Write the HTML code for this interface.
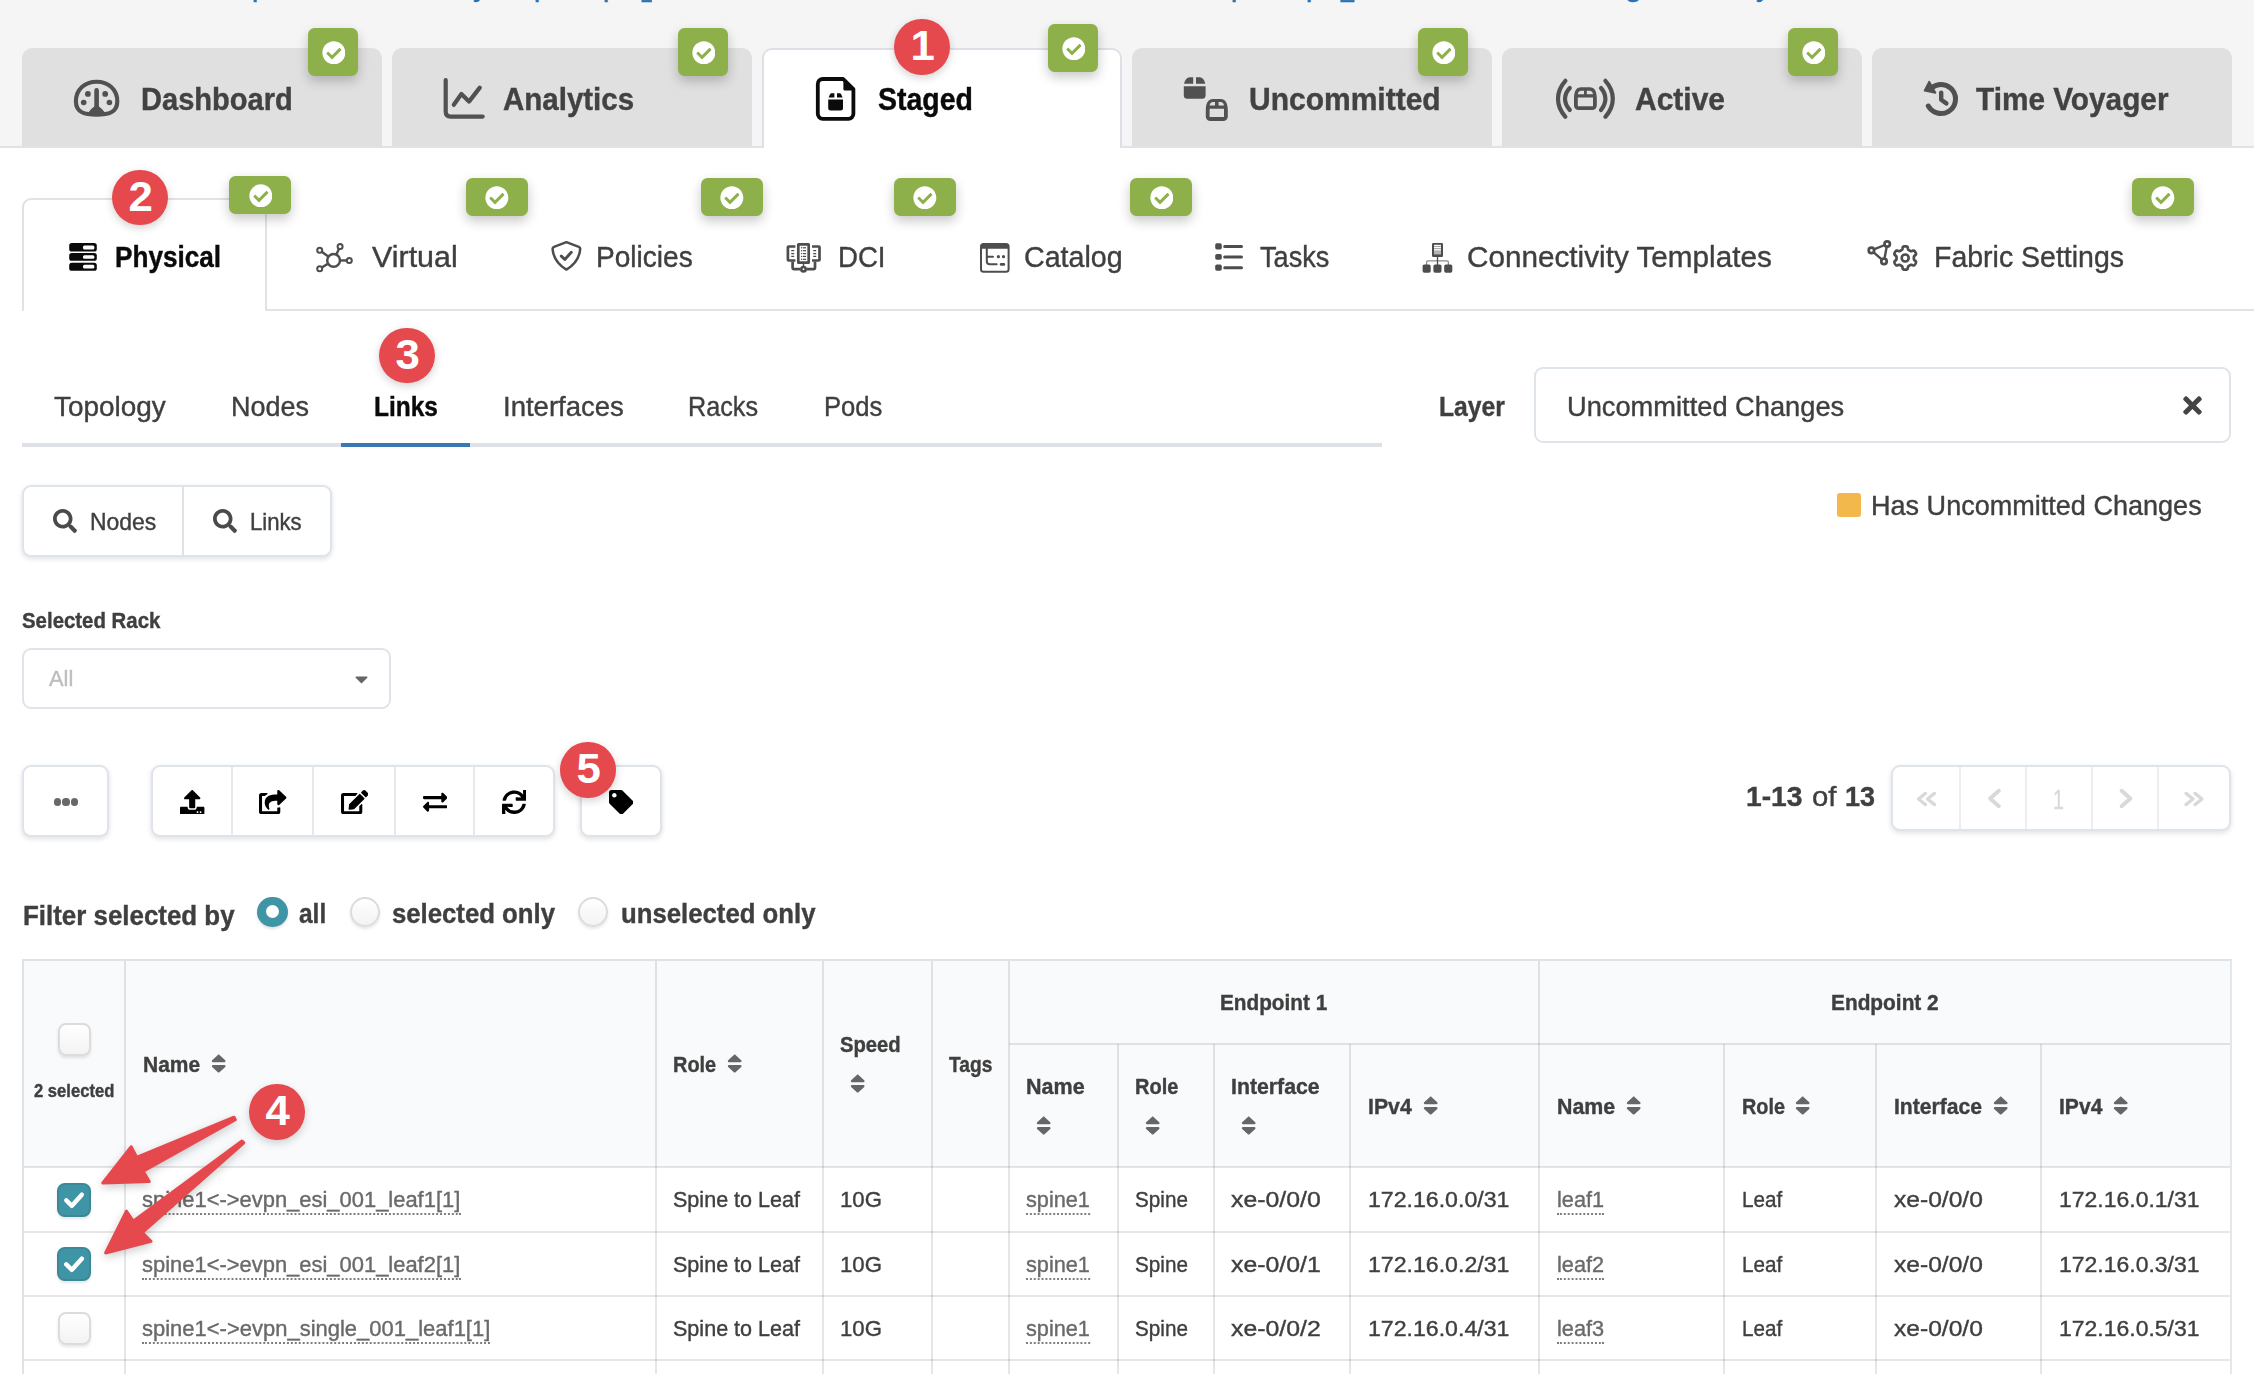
<!DOCTYPE html>
<html lang="en"><head><meta charset="utf-8"><title>Blueprint - Staged - Physical - Links</title>
<style>
html,body{margin:0;padding:0}
body{width:2254px;height:1374px;overflow:hidden;position:relative;background:#f5f5f5;
 font-family:"Liberation Sans",sans-serif;color:#3d3d3d}
#page{position:absolute;left:0;top:0;width:2254px;height:1374px;overflow:hidden}
#page div,#page nav,#page section,#page a,#page label,#page button,#page header,.a{position:absolute;box-sizing:border-box}
.t{-webkit-text-stroke:.4px currentColor;position:absolute;white-space:nowrap;line-height:1em;transform-origin:0 50%;display:block;text-decoration:none}
.white{background:#fff}
.tab{background:#e0e0e0;border-radius:10px 10px 0 0}
.tab.on{background:#fff;border:2px solid #dde1e7;border-bottom:none}
.badge{background:#8db04b;border-radius:6.5px;box-shadow:0 5px 12px rgba(0,0,0,.22)}
.num{background:#e5484d;border-radius:50%;box-shadow:0 3px 8px rgba(0,0,0,.18)}
.btn{background:#fff;border:2px solid #dfe3ea;border-radius:9px;box-shadow:0 2px 5px rgba(40,50,70,.15)}
.sel{background:#fff;border:2px solid #dfe3ea;border-radius:9px}
.cb{background:linear-gradient(#fff,#f3f3f3);border:2px solid #dcdcdc;border-radius:8px;box-shadow:0 2px 3px rgba(0,0,0,.10)}
.cb.on{background:#3f94a5;border-color:#3a8898}
.rd{background:linear-gradient(#fff,#f3f3f3);border:2px solid #dcdcdc;border-radius:50%;box-shadow:0 2px 3px rgba(0,0,0,.10)}
.vl{background:#dfe1e5;width:2px}
.hl{background:#dfe1e5;height:2px}
.dot{border-bottom:2px dotted #777}

</style></head>
<body>
<div id="page">
<header style="left:0;top:0;width:2254px;height:20px;overflow:hidden">
<span id="t0" class="t" style="left:251.7px;top:-29px;font-size:30px;color:#2a70b4;">p</span>
<span id="t1" class="t" style="left:473.0px;top:-29px;font-size:30px;color:#2a70b4;">y</span>
<span id="t2" class="t" style="left:533.7px;top:-29px;font-size:30px;color:#2a70b4;">p</span>
<span id="t3" class="t" style="left:602.7px;top:-29px;font-size:30px;color:#2a70b4;">p</span>
<span id="t4" class="t" style="left:642.4px;top:-29px;font-size:30px;color:#2a70b4;transform:scaleX(0.5753);">_</span>
<span id="t5" class="t" style="left:1230.7px;top:-29px;font-size:30px;color:#2a70b4;">p</span>
<span id="t6" class="t" style="left:1305.7px;top:-29px;font-size:30px;color:#2a70b4;">p</span>
<span id="t7" class="t" style="left:1341.0px;top:-29px;font-size:30px;color:#2a70b4;transform:scaleX(0.7790);">_</span>
<span id="t8" class="t" style="left:1625.0px;top:-29px;font-size:30px;color:#2a70b4;">g</span>
<span id="t9" class="t" style="left:1756.0px;top:-29px;font-size:30px;color:#2a70b4;">y</span>
</header>
<nav style="left:0;top:0;width:2254px;height:148px">
<div class="tab" style="left:22px;top:48px;width:360px;height:98px;"></div>
<span id="t10" class="t" style="left:141.3px;top:84px;font-size:31px;font-weight:700;color:#424242;transform:scaleX(0.9369);">Dashboard</span>
<div class="tab" style="left:392px;top:48px;width:360px;height:98px;"></div>
<span id="t11" class="t" style="left:502.5px;top:84px;font-size:31px;font-weight:700;color:#424242;transform:scaleX(0.9511);">Analytics</span>
<div class="tab on" style="left:762px;top:48px;width:360px;height:100px;"></div>
<span id="t12" class="t" style="left:877.8px;top:84px;font-size:31px;font-weight:700;color:#0a0a0a;transform:scaleX(0.9191);">Staged</span>
<div class="tab" style="left:1132px;top:48px;width:360px;height:98px;"></div>
<span id="t13" class="t" style="left:1248.8px;top:84px;font-size:31px;font-weight:700;color:#424242;transform:scaleX(0.9678);">Uncommitted</span>
<div class="tab" style="left:1502px;top:48px;width:360px;height:98px;"></div>
<span id="t14" class="t" style="left:1635.0px;top:84px;font-size:31px;font-weight:700;color:#424242;transform:scaleX(0.9673);">Active</span>
<div class="tab" style="left:1872px;top:48px;width:360px;height:98px;"></div>
<span id="t15" class="t" style="left:1976.3px;top:84px;font-size:31px;font-weight:700;color:#424242;transform:scaleX(0.9603);">Time Voyager</span>
</nav>
<div style="left:0px;top:146px;width:762px;height:2px;background:#dfe2e7"></div>
<div style="left:1122px;top:146px;width:1132px;height:2px;background:#dfe2e7"></div>
<div class="white" style="left:0px;top:148px;width:2254px;height:1226px;"></div>
<div style="left:764px;top:146px;width:356px;height:4px;background:#fff"></div>
<svg class="a" style="left:60px;top:70px;" width="70" height="55" viewBox="0 0 70 55"><path d="M36.6 44.6C25 44.6 15.9 42.6 15.9 31.5C15.9 19.5 25 11.7 36.6 11.7C48.2 11.7 57.3 19.5 57.3 31.5C57.3 42.6 48.2 44.6 36.6 44.6Z" fill="none" stroke="#515151" stroke-width="4.1"/><path d="M34.3 20.4a2.3 2.3 0 0 1 4.6 0V36.6C41 38 43 40 44.8 42.6L45.5 44.2C40 45.4 33 45.4 27.7 44.2L28.4 42.6C30.200 40 32.200 38 34.300 36.600Z" fill="#515151"/><circle cx="27.9" cy="23.9" r="2.9" fill="#515151"/><circle cx="45.2" cy="23.9" r="2.9" fill="#515151"/><circle cx="23.7" cy="32.5" r="2.8" fill="#515151"/><circle cx="49.4" cy="32.5" r="2.8" fill="#515151"/></svg>
<svg class="a" style="left:430px;top:70px;" width="70" height="55" viewBox="0 0 70 55"><path d="M15.7 10V41.600Q15.7 46.600 20.700 46.600H52.700" fill="none" stroke="#515151" stroke-width="4.2" stroke-linecap="round"/><path d="M23.8 34.800L31.400 24L39 31.600L49.800 17.600" fill="none" stroke="#515151" stroke-width="4.2" stroke-linecap="round" stroke-linejoin="round"/></svg>
<svg class="a" style="left:800px;top:70px;" width="70" height="55" viewBox="0 0 70 55"><path d="M22.8 9H43.200L53.400 19.200V43.800A5 5 0 0 1 48.400 48.800H22.800A5 5 0 0 1 17.800 43.800V14A5 5 0 0 1 22.800 9Z" fill="none" stroke="#0b0b0b" stroke-width="3.8" stroke-linejoin="round"/><path d="M43.400 9.500L53 19.100V20.600H45A1.600 1.600 0 0 1 43.400 19Z" fill="#0b0b0b"/><path d="M28.200 29.400H43V38.100A2.500 2.500 0 0 1 40.500 40.600H30.700A2.500 2.500 0 0 1 28.200 38.100Z" fill="#0b0b0b"/><path d="M28.600 27.400L30.200 23.900Q30.600 23.200 31.400 23.200H34.400V27.400Z" fill="#0b0b0b"/><path d="M37 23.200H39.800Q40.600 23.200 41 23.900L42.600 27.400H37Z" fill="#0b0b0b"/></svg>
<svg class="a" style="left:1170px;top:70px;" width="70" height="55" viewBox="0 0 70 55"><path d="M13.800 16.200H35.600V25.300A3.500 3.500 0 0 1 32.100 28.800H17.300A3.500 3.500 0 0 1 13.800 25.300Z" fill="#515151"/><path d="M14 13.800Q15.500 7.200 19.800 7.200H23.200V13.800Z" fill="#515151"/><path d="M26 7.200H29.600Q33.800 7.200 35.300 13.800H26Z" fill="#515151"/><path fill-rule="evenodd" fill="#515151" d="M35.800 40C36 33 38 29 43 29H50.600C55.600 29 57.600 33 57.800 40V46.500A4.500 4.500 0 0 1 53.300 51H40.300A4.500 4.500 0 0 1 35.800 46.500ZM39.600 35.600C39.900 33.300 41 32 43.200 32H45V35.600ZM48.600 32H50.400C52.600 32 53.700 33.300 54 35.600H48.600ZM39.600 38.800H54V47H39.600Z"/></svg>
<svg class="a" style="left:1545px;top:70px;" width="80" height="55" viewBox="0 0 80 55"><path d="M20.400 10.800Q13 19 13 28.800T20.400 46.800" fill="none" stroke="#515151" stroke-width="4.200" stroke-linecap="round"/><path d="M24.800 18Q20 23 20 28.800T24.800 40" fill="none" stroke="#515151" stroke-width="4.200" stroke-linecap="round"/><path d="M60.400 10.800Q67.800 19 67.800 28.800T60.400 46.800" fill="none" stroke="#515151" stroke-width="4.200" stroke-linecap="round"/><path d="M56 18Q60.400 23 60.400 28.800T56 40" fill="none" stroke="#515151" stroke-width="4.200" stroke-linecap="round"/><path fill-rule="evenodd" fill="#515151" d="M29 28C29.200 21 31.200 17.200 36.200 17.200H44.600C49.600 17.200 51.600 21 51.800 28V35.500A4.500 4.500 0 0 1 47.300 40H33.500A4.500 4.500 0 0 1 29 35.500ZM32.800 24.200C33.100 22 34.200 20.800 36.400 20.800H39V24.200ZM41.800 20.800H44.400C46.600 20.800 47.700 22 48 24.200H41.800ZM32.800 27.400H48V36.200H32.800Z"/></svg>
<svg class="a" style="left:1905px;top:70px;" width="70" height="55" viewBox="0 0 70 55"><path d="M27.07 17.57A14.5 14.5 0 1 1 23.32 36.03" fill="none" stroke="#515151" stroke-width="5" stroke-linecap="round"/><path d="M24.200 11.600L19.600 20.600L30.400 22.800Z" fill="#515151" stroke="#515151" stroke-width="1.800" stroke-linejoin="round"/><path d="M36.200 22.600V29.800L41.400 33.400" fill="none" stroke="#515151" stroke-width="4.400" stroke-linecap="round" stroke-linejoin="round"/></svg>
<div class="badge" style="left:308px;top:28px;width:50px;height:48px;"></div><svg class="a" style="left:321.5px;top:40.6px" width="23.7" height="23.7" viewBox="0 0 512 512" preserveAspectRatio="xMidYMid meet"><path fill="#fff" d="M504 256c0 136.967-111.033 248-248 248S8 392.967 8 256 119.033 8 256 8s248 111.033 248 248zM227.314 387.314l184-184c6.248-6.248 6.248-16.379 0-22.627l-22.627-22.627c-6.248-6.249-16.379-6.249-22.628 0L216 308.118l-70.059-70.059c-6.248-6.248-16.379-6.248-22.628 0l-22.627 22.627c-6.248 6.248-6.248 16.379 0 22.627l104 104c6.249 6.249 16.379 6.249 22.628.001z"/></svg>
<div class="badge" style="left:678px;top:28px;width:50px;height:48px;"></div><svg class="a" style="left:691.5px;top:40.6px" width="23.7" height="23.7" viewBox="0 0 512 512" preserveAspectRatio="xMidYMid meet"><path fill="#fff" d="M504 256c0 136.967-111.033 248-248 248S8 392.967 8 256 119.033 8 256 8s248 111.033 248 248zM227.314 387.314l184-184c6.248-6.248 6.248-16.379 0-22.627l-22.627-22.627c-6.248-6.249-16.379-6.249-22.628 0L216 308.118l-70.059-70.059c-6.248-6.248-16.379-6.248-22.628 0l-22.627 22.627c-6.248 6.248-6.248 16.379 0 22.627l104 104c6.249 6.249 16.379 6.249 22.628.001z"/></svg>
<div class="badge" style="left:1418px;top:28px;width:50px;height:48px;"></div><svg class="a" style="left:1431.6px;top:40.6px" width="23.7" height="23.7" viewBox="0 0 512 512" preserveAspectRatio="xMidYMid meet"><path fill="#fff" d="M504 256c0 136.967-111.033 248-248 248S8 392.967 8 256 119.033 8 256 8s248 111.033 248 248zM227.314 387.314l184-184c6.248-6.248 6.248-16.379 0-22.627l-22.627-22.627c-6.248-6.249-16.379-6.249-22.628 0L216 308.118l-70.059-70.059c-6.248-6.248-16.379-6.248-22.628 0l-22.627 22.627c-6.248 6.248-6.248 16.379 0 22.627l104 104c6.249 6.249 16.379 6.249 22.628.001z"/></svg>
<div class="badge" style="left:1788px;top:28px;width:50px;height:48px;"></div><svg class="a" style="left:1801.6px;top:40.6px" width="23.7" height="23.7" viewBox="0 0 512 512" preserveAspectRatio="xMidYMid meet"><path fill="#fff" d="M504 256c0 136.967-111.033 248-248 248S8 392.967 8 256 119.033 8 256 8s248 111.033 248 248zM227.314 387.314l184-184c6.248-6.248 6.248-16.379 0-22.627l-22.627-22.627c-6.248-6.249-16.379-6.249-22.628 0L216 308.118l-70.059-70.059c-6.248-6.248-16.379-6.248-22.628 0l-22.627 22.627c-6.248 6.248-6.248 16.379 0 22.627l104 104c6.249 6.249 16.379 6.249 22.628.001z"/></svg>
<div class="badge" style="left:1048px;top:24px;width:50px;height:48px;"></div><svg class="a" style="left:1061.6px;top:36.6px" width="23.7" height="23.7" viewBox="0 0 512 512" preserveAspectRatio="xMidYMid meet"><path fill="#fff" d="M504 256c0 136.967-111.033 248-248 248S8 392.967 8 256 119.033 8 256 8s248 111.033 248 248zM227.314 387.314l184-184c6.248-6.248 6.248-16.379 0-22.627l-22.627-22.627c-6.248-6.249-16.379-6.249-22.628 0L216 308.118l-70.059-70.059c-6.248-6.248-16.379-6.248-22.628 0l-22.627 22.627c-6.248 6.248-6.248 16.379 0 22.627l104 104c6.249 6.249 16.379 6.249 22.628.001z"/></svg>
<nav style="left:0;top:150px;width:2254px;height:170px">
<div style="left:22px;top:48px;width:245px;height:113px;border:2px solid #dfe2e7;border-bottom:none;border-radius:9px 9px 0 0;background:#fff"></div>
<div style="left:265px;top:159px;width:1989px;height:2px;background:#dfe2e7"></div>
</nav>
<span id="t16" class="t" style="left:115.2px;top:243px;font-size:29px;font-weight:700;color:#0a0a0a;transform:scaleX(0.9015);">Physical</span>
<span id="t17" class="t" style="left:371.8px;top:243px;font-size:29px;color:#3f3f3f;transform:scaleX(1.0491);">Virtual</span>
<span id="t18" class="t" style="left:596.3px;top:243px;font-size:29px;color:#3f3f3f;transform:scaleX(0.9676);">Policies</span>
<span id="t19" class="t" style="left:838.0px;top:243px;font-size:29px;color:#3f3f3f;transform:scaleX(0.9509);">DCI</span>
<span id="t20" class="t" style="left:1024.3px;top:243px;font-size:29px;color:#3f3f3f;transform:scaleX(0.9873);">Catalog</span>
<span id="t21" class="t" style="left:1260.0px;top:243px;font-size:29px;color:#3f3f3f;transform:scaleX(0.9347);">Tasks</span>
<span id="t22" class="t" style="left:1467.0px;top:243px;font-size:29px;color:#3f3f3f;transform:scaleX(1.0239);">Connectivity Templates</span>
<span id="t23" class="t" style="left:1933.8px;top:243px;font-size:29px;color:#3f3f3f;transform:scaleX(0.9823);">Fabric Settings</span>
<svg class="a" style="left:55px;top:230px;" width="70" height="55" viewBox="0 0 70 55"><rect x="14.2" y="13" width="27.6" height="8.60" rx="2.600" fill="#0b0b0b"/><rect x="28" y="15.4" width="11.4" height="4.00" rx="1.500" fill="#fff"/><rect x="14.2" y="23" width="27.6" height="7.80" rx="2.600" fill="#0b0b0b"/><rect x="28" y="25.2" width="11.4" height="3.60" rx="1.500" fill="#fff"/><rect x="14.2" y="32.8" width="27.6" height="8.00" rx="2.600" fill="#0b0b0b"/><rect x="28" y="34.8" width="11.4" height="3.80" rx="1.500" fill="#fff"/></svg>
<svg class="a" style="left:300px;top:230px;" width="70" height="55" viewBox="0 0 70 55"><path d="M33.6 30.4L19.7 20.3" stroke="#4d4d4d" stroke-width="2.400"/><path d="M33.6 30.4L40.1 16.4" stroke="#4d4d4d" stroke-width="2.400"/><path d="M33.6 30.4L49.3 30.5" stroke="#4d4d4d" stroke-width="2.400"/><path d="M33.6 30.4L19.7 38.7" stroke="#4d4d4d" stroke-width="2.400"/><circle cx="33.6" cy="30.4" r="6.400" fill="#fff" stroke="#4d4d4d" stroke-width="2.500"/><circle cx="19.7" cy="20.3" r="2.500" fill="#fff" stroke="#4d4d4d" stroke-width="2"/><circle cx="40.1" cy="16.4" r="2.500" fill="#fff" stroke="#4d4d4d" stroke-width="2"/><circle cx="49.3" cy="30.5" r="2.500" fill="#fff" stroke="#4d4d4d" stroke-width="2"/><circle cx="19.7" cy="38.7" r="2.500" fill="#fff" stroke="#4d4d4d" stroke-width="2"/></svg>
<svg class="a" style="left:535px;top:230px;" width="70" height="55" viewBox="0 0 70 55"><path d="M31.400 12.200L43.800 16.800Q45.400 17.500 45.200 19.200C44.400 27.500 39.500 34.800 31.400 39.600C23.300 34.800 18.400 27.500 17.600 19.200Q17.400 17.500 19 16.800Z" fill="none" stroke="#4d4d4d" stroke-width="2.500" stroke-linejoin="round"/><path d="M26.300 26.100L29.800 29.400L36.300 22.300" fill="none" stroke="#4d4d4d" stroke-width="2.900" stroke-linecap="round" stroke-linejoin="round"/></svg>
<svg class="a" style="left:770px;top:230px;" width="70" height="55" viewBox="0 0 70 55"><rect x="28.300" y="14.300" width="10.400" height="18.400" rx="0.300" fill="#fff" stroke="#4d4d4d" stroke-width="2.700"/><path d="M25.400 16.500H18.700Q17.900 16.500 17.900 17.300V29.700Q17.900 30.500 18.700 30.500H25.400" fill="none" stroke="#4d4d4d" stroke-width="2.700"/><path d="M42 16.500H48.700Q49.500 16.500 49.500 17.300V29.700Q49.500 30.500 48.700 30.500H42" fill="none" stroke="#4d4d4d" stroke-width="2.700"/><path d="M22.600 31.500V38Q22.600 39.100 23.700 39.100H30.500M36.500 39.100H43.900Q45 39.100 45 38V31.500" fill="none" stroke="#4d4d4d" stroke-width="2.700"/><path d="M33.500 34V36.200" stroke="#4d4d4d" stroke-width="1.400"/><circle cx="33.500" cy="39.200" r="2.200" fill="#fff" stroke="#4d4d4d" stroke-width="2.600"/><circle cx="31.600" cy="17.8" r="0.700" fill="#4d4d4d"/><path d="M32.900 17.8H36.100" stroke="#4d4d4d" stroke-width="1.200"/><circle cx="31.600" cy="20.7" r="0.700" fill="#4d4d4d"/><path d="M32.900 20.7H36.100" stroke="#4d4d4d" stroke-width="1.200"/><circle cx="31.600" cy="23.6" r="0.700" fill="#4d4d4d"/><path d="M32.900 23.6H36.100" stroke="#4d4d4d" stroke-width="1.200"/><circle cx="31.600" cy="26.4" r="0.700" fill="#4d4d4d"/><path d="M32.900 26.4H36.100" stroke="#4d4d4d" stroke-width="1.200"/><circle cx="31.600" cy="29.3" r="0.700" fill="#4d4d4d"/><path d="M32.900 29.3H36.100" stroke="#4d4d4d" stroke-width="1.200"/><path d="M21.200 20.7H24.200M43.200 20.7H46.200" stroke="#4d4d4d" stroke-width="1.300"/><path d="M21.200 23.6H24.200M43.200 23.6H46.200" stroke="#4d4d4d" stroke-width="1.300"/><path d="M21.200 26.4H24.200M43.200 26.4H46.200" stroke="#4d4d4d" stroke-width="1.300"/></svg>
<svg class="a" style="left:965px;top:230px;" width="70" height="55" viewBox="0 0 70 55"><rect x="16" y="14" width="27.600" height="27.800" rx="2.600" fill="#fff" stroke="#4d4d4d" stroke-width="2"/><path d="M16 18.800V16.600A2.600 2.600 0 0 1 18.600 14H41A2.600 2.600 0 0 1 43.600 16.600V18.800Z" fill="#4d4d4d"/><path d="M21.800 18.800V31.200Q21.800 34.200 24.800 34.200H31.600M21.800 26.700H28" fill="none" stroke="#4d4d4d" stroke-width="2" stroke-linecap="round"/><circle cx="33.400" cy="26.700" r="1.600" fill="#4d4d4d"/><circle cx="38.500" cy="26.700" r="1.600" fill="#4d4d4d"/><rect x="34.800" y="33.100" width="5.400" height="2.600" rx="1.300" fill="#4d4d4d"/></svg>
<svg class="a" style="left:1200px;top:230px;" width="70" height="55" viewBox="0 0 70 55"><rect x="15.200" y="13.2" width="6.600" height="6.20" rx="1.700" fill="#4d4d4d"/><rect x="23.200" y="14.90" width="19.800" height="3" rx="1.500" fill="#4d4d4d"/><rect x="15.200" y="24" width="6.600" height="5.80" rx="1.700" fill="#4d4d4d"/><rect x="23.200" y="25.60" width="19.800" height="3" rx="1.500" fill="#4d4d4d"/><rect x="15.200" y="34.6" width="6.600" height="6.20" rx="1.700" fill="#4d4d4d"/><rect x="23.200" y="36.20" width="19.800" height="3" rx="1.500" fill="#4d4d4d"/></svg>
<svg class="a" style="left:1405px;top:230px;" width="70" height="55" viewBox="0 0 70 55"><rect x="27" y="13" width="11" height="14" rx="1.200" fill="#4d4d4d"/><rect x="29" y="14.800" width="7" height="9.400" fill="#fff"/><rect x="29" y="16.100" width="7" height="0.900" fill="#9a9a9a"/><rect x="29" y="18.200" width="7" height="0.900" fill="#9a9a9a"/><rect x="29" y="20.300" width="7" height="3.900" fill="#b4b4b4"/><path d="M21.600 35V32.200Q21.600 30.800 23 30.800H42Q43.400 30.800 43.400 32.200V35" fill="none" stroke="#8c8c8c" stroke-width="1.300"/><path d="M32.500 27V35" stroke="#4d4d4d" stroke-width="1.300"/><rect x="17.6" y="34.400" width="8.100" height="8.400" rx="1.700" fill="#4d4d4d"/><rect x="28.4" y="34.400" width="8.100" height="8.400" rx="1.700" fill="#4d4d4d"/><rect x="39.2" y="34.400" width="8.100" height="8.400" rx="1.700" fill="#4d4d4d"/></svg>
<svg class="a" style="left:1855px;top:230px;" width="80" height="55" viewBox="0 0 80 55"><path d="M16.4 20.4L32.2 14.0" stroke="#4d4d4d" stroke-width="2.400"/><path d="M32.2 14.0L29.0 31.4" stroke="#4d4d4d" stroke-width="2.400"/><path d="M29.0 31.4L16.4 20.4" stroke="#4d4d4d" stroke-width="2.400"/><circle cx="16.4" cy="20.4" r="2.700" fill="#fff" stroke="#4d4d4d" stroke-width="2.700"/><circle cx="32.2" cy="14.0" r="2.700" fill="#fff" stroke="#4d4d4d" stroke-width="2.700"/><circle cx="29.0" cy="31.4" r="2.700" fill="#fff" stroke="#4d4d4d" stroke-width="2.700"/><path d="M50.20 16.30L50.61 16.31L51.02 16.34L51.42 16.39L51.82 16.49L52.20 16.67L52.53 17.03L52.76 17.71L52.90 18.58L53.04 19.26L53.24 19.64L53.49 19.86L53.75 20.03L54.02 20.17L54.29 20.32L54.55 20.47L54.81 20.62L55.07 20.78L55.33 20.94L55.60 21.09L55.92 21.19L56.35 21.17L57.01 20.95L57.83 20.64L58.53 20.50L59.01 20.60L59.36 20.84L59.64 21.14L59.89 21.46L60.12 21.80L60.33 22.15L60.53 22.51L60.71 22.88L60.86 23.25L60.98 23.64L61.01 24.06L60.86 24.54L60.39 25.08L59.71 25.63L59.19 26.09L58.96 26.46L58.89 26.78L58.88 27.09L58.89 27.39L58.90 27.70L58.90 28.00L58.90 28.30L58.89 28.61L58.88 28.91L58.89 29.22L58.96 29.54L59.19 29.91L59.71 30.37L60.39 30.92L60.86 31.46L61.01 31.94L60.98 32.36L60.86 32.75L60.71 33.12L60.53 33.49L60.33 33.85L60.12 34.20L59.89 34.54L59.64 34.86L59.36 35.16L59.01 35.40L58.53 35.50L57.83 35.36L57.01 35.05L56.35 34.83L55.92 34.81L55.60 34.91L55.33 35.06L55.07 35.22L54.81 35.38L54.55 35.53L54.29 35.68L54.02 35.83L53.75 35.97L53.49 36.14L53.24 36.36L53.04 36.74L52.90 37.42L52.76 38.29L52.53 38.97L52.20 39.33L51.82 39.51L51.42 39.61L51.02 39.66L50.61 39.69L50.20 39.70L49.79 39.69L49.38 39.66L48.98 39.61L48.58 39.51L48.20 39.33L47.87 38.97L47.64 38.29L47.50 37.42L47.36 36.74L47.16 36.36L46.91 36.14L46.65 35.97L46.38 35.83L46.11 35.68L45.85 35.53L45.59 35.38L45.33 35.22L45.07 35.06L44.80 34.91L44.48 34.81L44.05 34.83L43.39 35.05L42.57 35.36L41.87 35.50L41.39 35.40L41.04 35.16L40.76 34.86L40.51 34.54L40.28 34.20L40.07 33.85L39.87 33.49L39.69 33.12L39.54 32.75L39.42 32.36L39.39 31.94L39.54 31.46L40.01 30.92L40.69 30.37L41.21 29.91L41.44 29.54L41.51 29.22L41.52 28.91L41.51 28.61L41.50 28.30L41.50 28.00L41.50 27.70L41.51 27.39L41.52 27.09L41.51 26.78L41.44 26.46L41.21 26.09L40.69 25.63L40.01 25.08L39.54 24.54L39.39 24.06L39.42 23.64L39.54 23.25L39.69 22.88L39.87 22.51L40.07 22.15L40.28 21.80L40.51 21.46L40.76 21.14L41.04 20.84L41.39 20.60L41.87 20.50L42.57 20.64L43.39 20.95L44.05 21.17L44.48 21.19L44.80 21.09L45.07 20.94L45.33 20.78L45.59 20.62L45.85 20.47L46.11 20.32L46.38 20.17L46.65 20.03L46.91 19.86L47.16 19.64L47.36 19.26L47.50 18.58L47.64 17.71L47.87 17.03L48.20 16.67L48.58 16.49L48.98 16.39L49.38 16.34L49.79 16.31Z" fill="none" stroke="#4d4d4d" stroke-width="2.700" stroke-linejoin="round"/><circle cx="50.200" cy="28" r="3.500" fill="none" stroke="#4d4d4d" stroke-width="2.600"/></svg>
<div class="badge" style="left:229px;top:176px;width:62px;height:38px;"></div><svg class="a" style="left:248.5px;top:183.7px" width="23.7" height="23.7" viewBox="0 0 512 512" preserveAspectRatio="xMidYMid meet"><path fill="#fff" d="M504 256c0 136.967-111.033 248-248 248S8 392.967 8 256 119.033 8 256 8s248 111.033 248 248zM227.314 387.314l184-184c6.248-6.248 6.248-16.379 0-22.627l-22.627-22.627c-6.248-6.249-16.379-6.249-22.628 0L216 308.118l-70.059-70.059c-6.248-6.248-16.379-6.248-22.628 0l-22.627 22.627c-6.248 6.248-6.248 16.379 0 22.627l104 104c6.249 6.249 16.379 6.249 22.628.001z"/></svg>
<div class="badge" style="left:465.5px;top:178px;width:62px;height:38px;"></div><svg class="a" style="left:485.0px;top:185.7px" width="23.7" height="23.7" viewBox="0 0 512 512" preserveAspectRatio="xMidYMid meet"><path fill="#fff" d="M504 256c0 136.967-111.033 248-248 248S8 392.967 8 256 119.033 8 256 8s248 111.033 248 248zM227.314 387.314l184-184c6.248-6.248 6.248-16.379 0-22.627l-22.627-22.627c-6.248-6.249-16.379-6.249-22.628 0L216 308.118l-70.059-70.059c-6.248-6.248-16.379-6.248-22.628 0l-22.627 22.627c-6.248 6.248-6.248 16.379 0 22.627l104 104c6.249 6.249 16.379 6.249 22.628.001z"/></svg>
<div class="badge" style="left:700.5px;top:178px;width:62px;height:38px;"></div><svg class="a" style="left:720.0px;top:185.7px" width="23.7" height="23.7" viewBox="0 0 512 512" preserveAspectRatio="xMidYMid meet"><path fill="#fff" d="M504 256c0 136.967-111.033 248-248 248S8 392.967 8 256 119.033 8 256 8s248 111.033 248 248zM227.314 387.314l184-184c6.248-6.248 6.248-16.379 0-22.627l-22.627-22.627c-6.248-6.249-16.379-6.249-22.628 0L216 308.118l-70.059-70.059c-6.248-6.248-16.379-6.248-22.628 0l-22.627 22.627c-6.248 6.248-6.248 16.379 0 22.627l104 104c6.249 6.249 16.379 6.249 22.628.001z"/></svg>
<div class="badge" style="left:893.5px;top:178px;width:62px;height:38px;"></div><svg class="a" style="left:913.0px;top:185.7px" width="23.7" height="23.7" viewBox="0 0 512 512" preserveAspectRatio="xMidYMid meet"><path fill="#fff" d="M504 256c0 136.967-111.033 248-248 248S8 392.967 8 256 119.033 8 256 8s248 111.033 248 248zM227.314 387.314l184-184c6.248-6.248 6.248-16.379 0-22.627l-22.627-22.627c-6.248-6.249-16.379-6.249-22.628 0L216 308.118l-70.059-70.059c-6.248-6.248-16.379-6.248-22.628 0l-22.627 22.627c-6.248 6.248-6.248 16.379 0 22.627l104 104c6.249 6.249 16.379 6.249 22.628.001z"/></svg>
<div class="badge" style="left:1130px;top:178px;width:62px;height:38px;"></div><svg class="a" style="left:1149.6px;top:185.7px" width="23.7" height="23.7" viewBox="0 0 512 512" preserveAspectRatio="xMidYMid meet"><path fill="#fff" d="M504 256c0 136.967-111.033 248-248 248S8 392.967 8 256 119.033 8 256 8s248 111.033 248 248zM227.314 387.314l184-184c6.248-6.248 6.248-16.379 0-22.627l-22.627-22.627c-6.248-6.249-16.379-6.249-22.628 0L216 308.118l-70.059-70.059c-6.248-6.248-16.379-6.248-22.628 0l-22.627 22.627c-6.248 6.248-6.248 16.379 0 22.627l104 104c6.249 6.249 16.379 6.249 22.628.001z"/></svg>
<div class="badge" style="left:2131.5px;top:178px;width:62px;height:38px;"></div><svg class="a" style="left:2151.1px;top:185.7px" width="23.7" height="23.7" viewBox="0 0 512 512" preserveAspectRatio="xMidYMid meet"><path fill="#fff" d="M504 256c0 136.967-111.033 248-248 248S8 392.967 8 256 119.033 8 256 8s248 111.033 248 248zM227.314 387.314l184-184c6.248-6.248 6.248-16.379 0-22.627l-22.627-22.627c-6.248-6.249-16.379-6.249-22.628 0L216 308.118l-70.059-70.059c-6.248-6.248-16.379-6.248-22.628 0l-22.627 22.627c-6.248 6.248-6.248 16.379 0 22.627l104 104c6.249 6.249 16.379 6.249 22.628.001z"/></svg>
<div style="left:22px;top:443px;width:1360px;height:4px;background:#dee2e8"></div>
<div style="left:341px;top:443px;width:129px;height:4px;background:#3a78b5"></div>
<span id="t24" class="t" style="left:54.2px;top:393px;font-size:27.5px;color:#3f3f3f;transform:scaleX(1.0155);">Topology</span>
<span id="t25" class="t" style="left:230.6px;top:393px;font-size:27.5px;color:#3f3f3f;transform:scaleX(0.9811);">Nodes</span>
<span id="t26" class="t" style="left:374.0px;top:393px;font-size:27.5px;font-weight:700;color:#0a0a0a;transform:scaleX(0.8896);">Links</span>
<span id="t27" class="t" style="left:502.5px;top:393px;font-size:27.5px;color:#3f3f3f;transform:scaleX(1.0011);">Interfaces</span>
<span id="t28" class="t" style="left:688.0px;top:393px;font-size:27.5px;color:#3f3f3f;transform:scaleX(0.9162);">Racks</span>
<span id="t29" class="t" style="left:823.6px;top:393px;font-size:27.5px;color:#3f3f3f;transform:scaleX(0.9316);">Pods</span>
<span id="t30" class="t" style="left:1439.4px;top:393px;font-size:27.5px;font-weight:700;color:#3f3f3f;transform:scaleX(0.8979);">Layer</span>
<div class="sel" style="left:1534px;top:367px;width:697px;height:76px;"></div>
<span id="t31" class="t" style="left:1567.3px;top:393px;font-size:27.5px;color:#3f3f3f;transform:scaleX(0.9910);">Uncommitted Changes</span>
<svg class="a" style="left:2183px;top:392px" width="19" height="27" viewBox="0 0 352 512" preserveAspectRatio="xMidYMid meet"><path fill="#444" d="M242.720 256l100.070-100.070c12.280-12.280 12.280-32.190 0-44.480l-22.240-22.240c-12.280-12.280-32.190-12.280-44.480 0L176 189.280 75.930 89.210c-12.280-12.280-32.190-12.280-44.480 0L9.210 111.450c-12.280 12.280-12.280 32.190 0 44.480L109.280 256 9.210 356.070c-12.280 12.280-12.280 32.190 0 44.480l22.240 22.240c12.280 12.280 32.200 12.280 44.480 0L176 322.720l100.070 100.070c12.280 12.280 32.200 12.280 44.480 0l22.240-22.240c12.280-12.280 12.280-32.190 0-44.480L242.720 256z"/></svg>
<div style="left:1836.5px;top:492.5px;width:24.5px;height:24.5px;background:#f2b84b;border-radius:3px"></div>
<span id="t32" class="t" style="left:1871.3px;top:492px;font-size:27.5px;color:#3f3f3f;transform:scaleX(0.9834);">Has Uncommitted Changes</span>
<div class="btn" style="left:22px;top:485px;width:310px;height:72px;"></div>
<div style="left:182px;top:487px;width:2px;height:68px;background:#dfe2e7"></div>
<svg class="a" style="left:53.4px;top:508.9px" width="24" height="24" viewBox="0 0 512 512" preserveAspectRatio="xMidYMid meet"><path fill="#4a4a4a" d="M505 442.700L405.300 343c-4.500-4.500-10.600-7-17-7H372c27.600-35.300 44-79.700 44-128C416 93.100 322.900 0 208 0S0 93.100 0 208s93.100 208 208 208c48.300 0 92.700-16.400 128-44v16.300c0 6.400 2.500 12.500 7 17l99.700 99.700c9.400 9.400 24.600 9.400 33.900 0l28.300-28.300c9.400-9.400 9.400-24.600.1-34zM208 336c-70.700 0-128-57.200-128-128 0-70.700 57.200-128 128-128 70.700 0 128 57.200 128 128 0 70.700-57.200 128-128 128z"/></svg>
<span id="t33" class="t" style="left:89.7px;top:510px;font-size:24px;color:#3f3f3f;transform:scaleX(0.9557);">Nodes</span>
<svg class="a" style="left:213.2px;top:508.9px" width="24" height="24" viewBox="0 0 512 512" preserveAspectRatio="xMidYMid meet"><path fill="#4a4a4a" d="M505 442.700L405.300 343c-4.500-4.500-10.600-7-17-7H372c27.600-35.300 44-79.700 44-128C416 93.100 322.900 0 208 0S0 93.100 0 208s93.100 208 208 208c48.300 0 92.700-16.400 128-44v16.300c0 6.400 2.500 12.500 7 17l99.700 99.700c9.400 9.400 24.600 9.400 33.900 0l28.300-28.300c9.400-9.400 9.400-24.600.1-34zM208 336c-70.700 0-128-57.200-128-128 0-70.700 57.200-128 128-128 70.700 0 128 57.200 128 128 0 70.700-57.200 128-128 128z"/></svg>
<span id="t34" class="t" style="left:249.9px;top:510px;font-size:24px;color:#3f3f3f;transform:scaleX(0.9227);">Links</span>
<span id="t35" class="t" style="left:22.4px;top:610px;font-size:22.3px;font-weight:700;color:#3f3f3f;transform:scaleX(0.9152);">Selected Rack</span>
<div class="sel" style="left:22px;top:648px;width:369px;height:61px;"></div>
<span id="t36" class="t" style="left:48.7px;top:668px;font-size:22.3px;color:#bdbdbd;transform:scaleX(0.9806);">All</span>
<svg class="a" style="left:354.5px;top:667px" width="13" height="24" viewBox="0 0 320 512" preserveAspectRatio="xMidYMid meet"><path fill="#666" d="M31.300 192h257.300c17.800 0 26.700 21.500 14.100 34.100L174.100 354.800c-7.800 7.800-20.500 7.800-28.300 0L17.200 226.100C4.600 213.500 13.500 192 31.300 192z"/></svg>
<div class="btn" style="left:22px;top:765px;width:87px;height:72px;"></div>
<div style="left:53.6px;top:798.4px;width:7.2px;height:7.2px;background:#686868;border-radius:50%"></div>
<div style="left:62.400000000000006px;top:798.4px;width:7.2px;height:7.2px;background:#686868;border-radius:50%"></div>
<div style="left:71.2px;top:798.4px;width:7.2px;height:7.2px;background:#686868;border-radius:50%"></div>
<div class="btn" style="left:151px;top:765px;width:404px;height:72px;"></div>
<div style="left:230.5px;top:767px;width:2px;height:68px;background:#e6e8ec"></div>
<div style="left:312px;top:767px;width:2px;height:68px;background:#e6e8ec"></div>
<div style="left:394px;top:767px;width:2px;height:68px;background:#e6e8ec"></div>
<div style="left:473px;top:767px;width:2px;height:68px;background:#e6e8ec"></div>
<svg class="a" style="left:180.2px;top:789.7px" width="24.4" height="24.4" viewBox="0 0 512 512" preserveAspectRatio="xMidYMid meet"><path fill="#000" d="M296 384h-80c-13.300 0-24-10.700-24-24V192h-87.700c-17.800 0-26.700-21.500-14.100-34.100L242.300 5.700c7.500-7.500 19.800-7.500 27.300 0l152.200 152.200c12.600 12.600 3.700 34.100-14.100 34.100H320v168c0 13.300-10.700 24-24 24zm216-8v112c0 13.300-10.700 24-24 24H24c-13.300 0-24-10.700-24-24V376c0-13.300 10.700-24 24-24h136v8c0 30.900 25.100 56 56 56h80c30.900 0 56-25.100 56-56v-8h136c13.300 0 24 10.700 24 24zm-124 88c0-11-9-20-20-20s-20 9-20 20 9 20 20 20 20-9 20-20zm64 0c0-11-9-20-20-20s-20 9-20 20 9 20 20 20 20-9 20-20z"/></svg>
<svg class="a" style="left:259.2px;top:789.7px" width="27.4" height="24.4" viewBox="0 0 576 512" preserveAspectRatio="xMidYMid meet"><path fill="#000" d="M568.482 177.448L424.479 313.433C409.300 327.768 384 317.140 384 295.985v-71.963c-144.575.970-205.566 35.113-164.775 171.353 4.483 14.973-12.846 26.567-25.006 17.330C155.252 383.105 120 326.488 120 269.339c0-143.937 117.599-172.500 264-173.312V24.012c0-21.174 25.317-31.768 40.479-17.448l144.003 135.988c10.020 9.463 10.028 25.425 0 34.896zM384 379.128V448H64V128h50.916a11.990 11.990 0 0 0 8.648-3.693c14.953-15.568 32.237-27.890 51.014-37.676C185.708 80.830 181.584 64 169.033 64H48C21.490 64 0 85.490 0 112v352c0 26.510 21.490 48 48 48h352c26.510 0 48-21.490 48-48v-88.806c0-8.288-8.197-14.066-16.011-11.302a71.830 71.830 0 0 1-34.189 3.377c-7.270-1.046-13.800 4.514-13.800 11.859z"/></svg>
<svg class="a" style="left:341px;top:789.7px" width="27.4" height="24.4" viewBox="0 0 576 512" preserveAspectRatio="xMidYMid meet"><path fill="#000" d="M402.600 83.200l90.200 90.200c3.800 3.800 3.800 10 0 13.800L274.400 405.600l-92.800 10.300c-12.400 1.400-22.900-9.100-21.500-21.500l10.300-92.800L388.800 83.200c3.800-3.800 10-3.800 13.800 0zm162-22.900l-48.800-48.800c-15.200-15.200-39.900-15.200-55.200 0l-35.400 35.400c-3.800 3.800-3.800 10 0 13.800l90.200 90.200c3.800 3.800 10 3.800 13.800 0l35.400-35.400c15.200-15.300 15.200-40 0-55.200zM384 346.200V448H64V128h229.800c3.200 0 6.200-1.300 8.500-3.500l40-40c7.600-7.600 2.200-20.500-8.500-20.500H48C21.500 64 0 85.500 0 112v352c0 26.500 21.500 48 48 48h352c26.500 0 48-21.500 48-48V306.200c0-10.700-12.900-16-20.500-8.500l-40 40c-2.200 2.300-3.500 5.300-3.500 8.500z"/></svg>
<svg class="a" style="left:422.8px;top:789.7px" width="24.4" height="24.4" viewBox="0 0 512 512" preserveAspectRatio="xMidYMid meet"><path fill="#000" d="M0 168v-16c0-13.255 10.745-24 24-24h360V80c0-21.367 25.899-32.042 40.971-16.971l80 80c9.372 9.373 9.372 24.569 0 33.941l-80 80C409.956 271.982 384 261.456 384 240v-48H24c-13.255 0-24-10.745-24-24zm488 152H128v-48c0-21.314-25.862-32.080-40.971-16.971l-80 80c-9.372 9.373-9.372 24.569 0 33.941l80 80C102.057 463.997 128 453.437 128 432v-48h360c13.255 0 24-10.745 24-24v-16c0-13.255-10.745-24-24-24z"/></svg>
<svg class="a" style="left:501.9px;top:789.7px" width="24.4" height="24.4" viewBox="0 0 512 512" preserveAspectRatio="xMidYMid meet"><path fill="#000" d="M440.650 12.570l4 82.770A247.160 247.160 0 0 0 255.830 8C134.730 8 33.910 94.920 12.290 209.820A12 12 0 0 0 24.090 224h49.050a12 12 0 0 0 11.670-9.260 175.910 175.910 0 0 1 317-56.940l-101.460-4.860a12 12 0 0 0-12.570 12v47.410a12 12 0 0 0 12 12H500a12 12 0 0 0 12-12V12a12 12 0 0 0-12-12h-47.370a12 12 0 0 0-11.980 12.570zM255.830 432a175.610 175.610 0 0 1-146-77.800l101.800 4.870a12 12 0 0 0 12.570-12v-47.400a12 12 0 0 0-12-12H12a12 12 0 0 0-12 12V500a12 12 0 0 0 12 12h47.350a12 12 0 0 0 12-12.600l-4.150-82.570A247.170 247.170 0 0 0 255.830 504c121.110 0 221.930-86.920 243.550-201.820a12 12 0 0 0-11.800-14.180h-49.050a12 12 0 0 0-11.670 9.260A175.860 175.860 0 0 1 255.830 432z"/></svg>
<div class="btn" style="left:580px;top:765px;width:81.5px;height:72px;"></div>
<svg class="a" style="left:608.6px;top:789.8px" width="24.4" height="24.4" viewBox="0 0 512 512" preserveAspectRatio="xMidYMid meet"><path fill="#000" d="M0 252.118V48C0 21.490 21.490 0 48 0h204.118a48 48 0 0 1 33.941 14.059l211.882 211.882c18.745 18.745 18.745 49.137 0 67.882L293.823 497.941c-18.745 18.745-49.137 18.745-67.882 0L14.059 286.059A48 48 0 0 1 0 252.118zM112 64c-26.510 0-48 21.490-48 48s21.490 48 48 48 48-21.490 48-48-21.490-48-48-48z"/></svg>
<span id="t37" class="t" style="left:1746.0px;top:783px;font-size:28px;font-weight:700;color:#3f3f3f;transform:scaleX(1.0081);">1-13</span>
<span id="t38" class="t" style="left:1811.5px;top:783px;font-size:28px;color:#3f3f3f;transform:scaleX(1.0488);">of</span>
<span id="t39" class="t" style="left:1845.0px;top:783px;font-size:28px;font-weight:700;color:#3f3f3f;transform:scaleX(0.9629);">13</span>
<div class="btn" style="left:1891px;top:765px;width:340px;height:66px;"></div>
<div style="left:1959px;top:767px;width:2px;height:62px;background:#eceef1"></div>
<div style="left:2025px;top:767px;width:2px;height:62px;background:#eceef1"></div>
<div style="left:2091px;top:767px;width:2px;height:62px;background:#eceef1"></div>
<div style="left:2157px;top:767px;width:2px;height:62px;background:#eceef1"></div>
<svg class="a" style="left:1891px;top:765px;" width="340" height="66" viewBox="0 0 340 66"><path d="M34.5 28.4L27.5 34.0L34.5 39.6" fill="none" stroke="#d9d9d9" stroke-width="3.3" stroke-linecap="round" stroke-linejoin="round"/><path d="M43.5 28.4L36.5 34.0L43.5 39.6" fill="none" stroke="#d9d9d9" stroke-width="3.3" stroke-linecap="round" stroke-linejoin="round"/><path d="M107.9 25.7L99.1 33.5L107.9 41.3" fill="none" stroke="#d9d9d9" stroke-width="3.9" stroke-linecap="round" stroke-linejoin="round"/><path d="M230.6 25.7L239.4 33.5L230.6 41.3" fill="none" stroke="#d9d9d9" stroke-width="3.9" stroke-linecap="round" stroke-linejoin="round"/><path d="M295.0 28.4L302.0 34.0L295.0 39.6" fill="none" stroke="#d9d9d9" stroke-width="3.3" stroke-linecap="round" stroke-linejoin="round"/><path d="M304.0 28.4L311.0 34.0L304.0 39.6" fill="none" stroke="#d9d9d9" stroke-width="3.3" stroke-linecap="round" stroke-linejoin="round"/></svg>
<span id="t40" class="t" style="left:2052.5px;top:786px;font-size:28px;color:#dadada;transform:scaleX(0.7061);">1</span>
<span id="t41" class="t" style="left:22.8px;top:902px;font-size:27.5px;font-weight:700;color:#3f3f3f;transform:scaleX(0.9418);">Filter selected by</span>
<div style="left:257px;top:896.5px;width:30.5px;height:30.5px;background:#3f94a5;border-radius:50%;box-shadow:0 2px 3px rgba(0,0,0,.12)"></div>
<div style="left:265.7px;top:905.2px;width:13.1px;height:13.1px;background:#fff;border-radius:50%"></div>
<span id="t42" class="t" style="left:299.4px;top:900px;font-size:27.5px;font-weight:700;color:#3f3f3f;transform:scaleX(0.8895);">all</span>
<div class="rd" style="left:350px;top:896.5px;width:30px;height:30px;"></div>
<span id="t43" class="t" style="left:392.0px;top:900px;font-size:27.5px;font-weight:700;color:#3f3f3f;transform:scaleX(0.9354);">selected only</span>
<div class="rd" style="left:578px;top:896.5px;width:30px;height:30px;"></div>
<span id="t44" class="t" style="left:621.0px;top:900px;font-size:27.5px;font-weight:700;color:#3f3f3f;transform:scaleX(0.9358);">unselected only</span>
<div style="left:22px;top:959px;width:2210px;height:420px;border:2px solid #dfe2e7;border-bottom:none;border-radius:0;border-right-color:#e6e7e9;background:#fff"></div>
<div style="left:24px;top:961px;width:2206px;height:205.5px;background:#f9fafb"></div>
<div style="left:124px;top:961px;width:2px;height:420px;background:rgba(34,36,38,.115)"></div>
<div style="left:654.7px;top:961px;width:2px;height:420px;background:rgba(34,36,38,.115)"></div>
<div style="left:821.9px;top:961px;width:2px;height:420px;background:rgba(34,36,38,.115)"></div>
<div style="left:930.9px;top:961px;width:2px;height:420px;background:rgba(34,36,38,.115)"></div>
<div style="left:1007.9px;top:961px;width:2px;height:420px;background:rgba(34,36,38,.115)"></div>
<div style="left:1538.1px;top:961px;width:2px;height:420px;background:rgba(34,36,38,.115)"></div>
<div style="left:1116.8px;top:1044px;width:2px;height:340px;background:rgba(34,36,38,.115)"></div>
<div style="left:1213px;top:1044px;width:2px;height:340px;background:rgba(34,36,38,.115)"></div>
<div style="left:1349px;top:1044px;width:2px;height:340px;background:rgba(34,36,38,.115)"></div>
<div style="left:1723px;top:1044px;width:2px;height:340px;background:rgba(34,36,38,.115)"></div>
<div style="left:1875px;top:1044px;width:2px;height:340px;background:rgba(34,36,38,.115)"></div>
<div style="left:2040.2px;top:1044px;width:2px;height:340px;background:rgba(34,36,38,.115)"></div>
<div style="left:1009px;top:1043px;width:1221px;height:2px;background:rgba(34,36,38,.115)"></div>
<div style="left:24px;top:1165.5px;width:2206px;height:2px;background:rgba(34,36,38,.115)"></div>
<div style="left:24px;top:1230.5px;width:2206px;height:2px;background:rgba(34,36,38,.115)"></div>
<div style="left:24px;top:1294.8px;width:2206px;height:2px;background:rgba(34,36,38,.115)"></div>
<div style="left:24px;top:1359.3px;width:2206px;height:2px;background:rgba(34,36,38,.115)"></div>
<div class="cb" style="left:57.5px;top:1023px;width:33px;height:33px;"></div>
<span id="t45" class="t" style="left:33.7px;top:1082px;font-size:18.6px;font-weight:700;color:#3f3f3f;transform:scaleX(0.8928);">2 selected</span>
<span id="t46" class="t" style="left:142.9px;top:1054px;font-size:22.3px;font-weight:700;color:#3f3f3f;transform:scaleX(0.9402);">Name</span>
<svg class="a" style="left:211.3px;top:1051.7px" width="15.4" height="23.2" viewBox="0 0 320 512" preserveAspectRatio="none"><path fill="#666" d="M41 288h238c21.400 0 32.100 25.900 17 41L177 448c-9.400 9.400-24.600 9.400-33.900 0L24 329c-15.100-15.100-4.400-41 17-41zm255-105L177 64c-9.400-9.400-24.600-9.400-33.900 0L24 183c-15.100 15.100-4.400 41 17 41h238c21.400 0 32.100-25.900 17-41z"/></svg>
<span id="t47" class="t" style="left:672.8px;top:1054px;font-size:22.3px;font-weight:700;color:#3f3f3f;transform:scaleX(0.8939);">Role</span>
<svg class="a" style="left:726.6px;top:1051.7px" width="15.4" height="23.2" viewBox="0 0 320 512" preserveAspectRatio="none"><path fill="#666" d="M41 288h238c21.400 0 32.100 25.900 17 41L177 448c-9.400 9.400-24.600 9.400-33.900 0L24 329c-15.100-15.100-4.400-41 17-41zm255-105L177 64c-9.400-9.400-24.600-9.400-33.900 0L24 183c-15.100 15.100-4.400 41 17 41h238c21.400 0 32.100-25.900 17-41z"/></svg>
<span id="t48" class="t" style="left:840.3px;top:1034px;font-size:22.3px;font-weight:700;color:#3f3f3f;transform:scaleX(0.9070);">Speed</span>
<svg class="a" style="left:850.1px;top:1071.9px" width="15.4" height="23.2" viewBox="0 0 320 512" preserveAspectRatio="none"><path fill="#666" d="M41 288h238c21.400 0 32.100 25.900 17 41L177 448c-9.400 9.400-24.600 9.400-33.900 0L24 329c-15.100-15.100-4.400-41 17-41zm255-105L177 64c-9.400-9.400-24.600-9.400-33.900 0L24 183c-15.100 15.100-4.400 41 17 41h238c21.400 0 32.100-25.900 17-41z"/></svg>
<span id="t49" class="t" style="left:948.9px;top:1054px;font-size:22.3px;font-weight:700;color:#3f3f3f;transform:scaleX(0.8593);">Tags</span>
<span id="t50" class="t" style="left:1220.4px;top:992px;font-size:22.3px;font-weight:700;color:#3f3f3f;transform:scaleX(0.9307);">Endpoint 1</span>
<span id="t51" class="t" style="left:1831.0px;top:992px;font-size:22.3px;font-weight:700;color:#3f3f3f;transform:scaleX(0.9350);">Endpoint 2</span>
<span id="t52" class="t" style="left:1025.9px;top:1076px;font-size:22.3px;font-weight:700;color:#3f3f3f;transform:scaleX(0.9649);">Name</span>
<svg class="a" style="left:1036.1px;top:1113.7px" width="15.4" height="23.2" viewBox="0 0 320 512" preserveAspectRatio="none"><path fill="#666" d="M41 288h238c21.400 0 32.100 25.900 17 41L177 448c-9.400 9.400-24.600 9.400-33.900 0L24 329c-15.100-15.100-4.400-41 17-41zm255-105L177 64c-9.400-9.400-24.600-9.400-33.900 0L24 183c-15.100 15.100-4.400 41 17 41h238c21.400 0 32.100-25.900 17-41z"/></svg>
<span id="t53" class="t" style="left:1135.2px;top:1076px;font-size:22.3px;font-weight:700;color:#3f3f3f;transform:scaleX(0.8960);">Role</span>
<svg class="a" style="left:1145.0px;top:1113.7px" width="15.4" height="23.2" viewBox="0 0 320 512" preserveAspectRatio="none"><path fill="#666" d="M41 288h238c21.400 0 32.100 25.900 17 41L177 448c-9.400 9.400-24.600 9.400-33.900 0L24 329c-15.100-15.100-4.400-41 17-41zm255-105L177 64c-9.400-9.400-24.600-9.400-33.900 0L24 183c-15.100 15.100-4.400 41 17 41h238c21.400 0 32.100-25.900 17-41z"/></svg>
<span id="t54" class="t" style="left:1230.7px;top:1076px;font-size:22.3px;font-weight:700;color:#3f3f3f;transform:scaleX(0.9542);">Interface</span>
<svg class="a" style="left:1240.5px;top:1113.7px" width="15.4" height="23.2" viewBox="0 0 320 512" preserveAspectRatio="none"><path fill="#666" d="M41 288h238c21.400 0 32.100 25.900 17 41L177 448c-9.400 9.400-24.600 9.400-33.900 0L24 329c-15.100-15.100-4.400-41 17-41zm255-105L177 64c-9.400-9.400-24.600-9.400-33.900 0L24 183c-15.100 15.100-4.400 41 17 41h238c21.400 0 32.100-25.900 17-41z"/></svg>
<span id="t55" class="t" style="left:1367.5px;top:1096px;font-size:22.3px;font-weight:700;color:#3f3f3f;transform:scaleX(0.9526);">IPv4</span>
<svg class="a" style="left:1423.1px;top:1093.7px" width="15.4" height="23.2" viewBox="0 0 320 512" preserveAspectRatio="none"><path fill="#666" d="M41 288h238c21.400 0 32.100 25.900 17 41L177 448c-9.400 9.400-24.600 9.400-33.900 0L24 329c-15.100-15.100-4.400-41 17-41zm255-105L177 64c-9.400-9.400-24.600-9.400-33.900 0L24 183c-15.100 15.100-4.400 41 17 41h238c21.400 0 32.100-25.900 17-41z"/></svg>
<span id="t56" class="t" style="left:1556.7px;top:1096px;font-size:22.3px;font-weight:700;color:#3f3f3f;transform:scaleX(0.9583);">Name</span>
<svg class="a" style="left:1625.6px;top:1093.7px" width="15.4" height="23.2" viewBox="0 0 320 512" preserveAspectRatio="none"><path fill="#666" d="M41 288h238c21.400 0 32.100 25.900 17 41L177 448c-9.400 9.400-24.600 9.400-33.900 0L24 329c-15.100-15.100-4.400-41 17-41zm255-105L177 64c-9.400-9.400-24.600-9.400-33.900 0L24 183c-15.100 15.100-4.400 41 17 41h238c21.400 0 32.100-25.900 17-41z"/></svg>
<span id="t57" class="t" style="left:1742.0px;top:1096px;font-size:22.3px;font-weight:700;color:#3f3f3f;transform:scaleX(0.8898);">Role</span>
<svg class="a" style="left:1795.3px;top:1093.7px" width="15.4" height="23.2" viewBox="0 0 320 512" preserveAspectRatio="none"><path fill="#666" d="M41 288h238c21.400 0 32.100 25.900 17 41L177 448c-9.400 9.400-24.600 9.400-33.900 0L24 329c-15.100-15.100-4.400-41 17-41zm255-105L177 64c-9.400-9.400-24.600-9.400-33.900 0L24 183c-15.100 15.100-4.400 41 17 41h238c21.400 0 32.100-25.900 17-41z"/></svg>
<span id="t58" class="t" style="left:1893.7px;top:1096px;font-size:22.3px;font-weight:700;color:#3f3f3f;transform:scaleX(0.9478);">Interface</span>
<svg class="a" style="left:1992.8px;top:1093.7px" width="15.4" height="23.2" viewBox="0 0 320 512" preserveAspectRatio="none"><path fill="#666" d="M41 288h238c21.400 0 32.100 25.900 17 41L177 448c-9.400 9.400-24.600 9.400-33.900 0L24 329c-15.100-15.100-4.400-41 17-41zm255-105L177 64c-9.400-9.400-24.600-9.400-33.900 0L24 183c-15.100 15.100-4.400 41 17 41h238c21.400 0 32.100-25.900 17-41z"/></svg>
<span id="t59" class="t" style="left:2058.5px;top:1096px;font-size:22.3px;font-weight:700;color:#3f3f3f;transform:scaleX(0.9460);">IPv4</span>
<svg class="a" style="left:2113.0px;top:1093.7px" width="15.4" height="23.2" viewBox="0 0 320 512" preserveAspectRatio="none"><path fill="#666" d="M41 288h238c21.400 0 32.100 25.900 17 41L177 448c-9.400 9.400-24.600 9.400-33.900 0L24 329c-15.100-15.100-4.400-41 17-41zm255-105L177 64c-9.400-9.400-24.600-9.400-33.900 0L24 183c-15.100 15.100-4.400 41 17 41h238c21.400 0 32.100-25.900 17-41z"/></svg>
<div class="cb on" style="left:57px;top:1183.0px;width:33.8px;height:33.8px;"></div>
<svg class="a" style="left:57px;top:1183.0px;" width="33.8" height="33.8" viewBox="0 0 33.8 33.8"><path d="M9.300 17.400L14.900 22.800L24.800 11.700" fill="none" stroke="#fff" stroke-width="4.400" stroke-linecap="round" stroke-linejoin="round"/></svg>
<a id="t60" class="t" style="left:142.2px;top:1189px;font-size:22.3px;color:#6a6a6a;transform:scaleX(0.9837);border-bottom:2px dotted #7d7d7d;padding-bottom:1.5px;">spine1&lt;-&gt;evpn_esi_001_leaf1[1]</a>
<span id="t61" class="t" style="left:672.8px;top:1189px;font-size:22.3px;color:#3f3f3f;transform:scaleX(0.9664);">Spine to Leaf</span>
<span id="t62" class="t" style="left:840.3px;top:1189px;font-size:22.3px;color:#3f3f3f;transform:scaleX(0.9939);">10G</span>
<a id="t63" class="t" style="left:1025.9px;top:1189px;font-size:22.3px;color:#6a6a6a;transform:scaleX(0.9723);border-bottom:2px dotted #7d7d7d;padding-bottom:1.5px;">spine1</a>
<span id="t64" class="t" style="left:1135.2px;top:1189px;font-size:22.3px;color:#3f3f3f;transform:scaleX(0.9276);">Spine</span>
<span id="t65" class="t" style="left:1230.7px;top:1189px;font-size:22.3px;color:#3f3f3f;transform:scaleX(1.1144);">xe-0/0/0</span>
<span id="t66" class="t" style="left:1367.7px;top:1189px;font-size:22.3px;color:#3f3f3f;transform:scaleX(1.0367);">172.16.0.0/31</span>
<a id="t67" class="t" style="left:1556.7px;top:1189px;font-size:22.3px;color:#6a6a6a;transform:scaleX(0.9740);border-bottom:2px dotted #7d7d7d;padding-bottom:1.5px;">leaf1</a>
<span id="t68" class="t" style="left:1742.0px;top:1189px;font-size:22.3px;color:#3f3f3f;transform:scaleX(0.9261);">Leaf</span>
<span id="t69" class="t" style="left:1893.7px;top:1189px;font-size:22.3px;color:#3f3f3f;transform:scaleX(1.1033);">xe-0/0/0</span>
<span id="t70" class="t" style="left:2058.5px;top:1189px;font-size:22.3px;color:#3f3f3f;transform:scaleX(1.0301);">172.16.0.1/31</span>
<div class="cb on" style="left:57px;top:1247.4px;width:33.8px;height:33.8px;"></div>
<svg class="a" style="left:57px;top:1247.4px;" width="33.8" height="33.8" viewBox="0 0 33.8 33.8"><path d="M9.300 17.400L14.900 22.800L24.800 11.700" fill="none" stroke="#fff" stroke-width="4.400" stroke-linecap="round" stroke-linejoin="round"/></svg>
<a id="t71" class="t" style="left:142.2px;top:1254px;font-size:22.3px;color:#6a6a6a;transform:scaleX(0.9837);border-bottom:2px dotted #7d7d7d;padding-bottom:1.5px;">spine1&lt;-&gt;evpn_esi_001_leaf2[1]</a>
<span id="t72" class="t" style="left:672.8px;top:1254px;font-size:22.3px;color:#3f3f3f;transform:scaleX(0.9664);">Spine to Leaf</span>
<span id="t73" class="t" style="left:840.3px;top:1254px;font-size:22.3px;color:#3f3f3f;transform:scaleX(0.9939);">10G</span>
<a id="t74" class="t" style="left:1025.9px;top:1254px;font-size:22.3px;color:#6a6a6a;transform:scaleX(0.9723);border-bottom:2px dotted #7d7d7d;padding-bottom:1.5px;">spine1</a>
<span id="t75" class="t" style="left:1135.2px;top:1254px;font-size:22.3px;color:#3f3f3f;transform:scaleX(0.9276);">Spine</span>
<span id="t76" class="t" style="left:1230.7px;top:1254px;font-size:22.3px;color:#3f3f3f;transform:scaleX(1.1144);">xe-0/0/1</span>
<span id="t77" class="t" style="left:1367.7px;top:1254px;font-size:22.3px;color:#3f3f3f;transform:scaleX(1.0367);">172.16.0.2/31</span>
<a id="t78" class="t" style="left:1556.7px;top:1254px;font-size:22.3px;color:#6a6a6a;transform:scaleX(0.9740);border-bottom:2px dotted #7d7d7d;padding-bottom:1.5px;">leaf2</a>
<span id="t79" class="t" style="left:1742.0px;top:1254px;font-size:22.3px;color:#3f3f3f;transform:scaleX(0.9261);">Leaf</span>
<span id="t80" class="t" style="left:1893.7px;top:1254px;font-size:22.3px;color:#3f3f3f;transform:scaleX(1.1033);">xe-0/0/0</span>
<span id="t81" class="t" style="left:2058.5px;top:1254px;font-size:22.3px;color:#3f3f3f;transform:scaleX(1.0301);">172.16.0.3/31</span>
<div class="cb" style="left:57.5px;top:1312.3px;width:33px;height:32.6px;"></div>
<a id="t82" class="t" style="left:142.2px;top:1318px;font-size:22.3px;color:#6a6a6a;transform:scaleX(0.9858);border-bottom:2px dotted #7d7d7d;padding-bottom:1.5px;">spine1&lt;-&gt;evpn_single_001_leaf1[1]</a>
<span id="t83" class="t" style="left:672.8px;top:1318px;font-size:22.3px;color:#3f3f3f;transform:scaleX(0.9664);">Spine to Leaf</span>
<span id="t84" class="t" style="left:840.3px;top:1318px;font-size:22.3px;color:#3f3f3f;transform:scaleX(0.9939);">10G</span>
<a id="t85" class="t" style="left:1025.9px;top:1318px;font-size:22.3px;color:#6a6a6a;transform:scaleX(0.9723);border-bottom:2px dotted #7d7d7d;padding-bottom:1.5px;">spine1</a>
<span id="t86" class="t" style="left:1135.2px;top:1318px;font-size:22.3px;color:#3f3f3f;transform:scaleX(0.9276);">Spine</span>
<span id="t87" class="t" style="left:1230.7px;top:1318px;font-size:22.3px;color:#3f3f3f;transform:scaleX(1.1144);">xe-0/0/2</span>
<span id="t88" class="t" style="left:1367.7px;top:1318px;font-size:22.3px;color:#3f3f3f;transform:scaleX(1.0367);">172.16.0.4/31</span>
<a id="t89" class="t" style="left:1556.7px;top:1318px;font-size:22.3px;color:#6a6a6a;transform:scaleX(0.9740);border-bottom:2px dotted #7d7d7d;padding-bottom:1.5px;">leaf3</a>
<span id="t90" class="t" style="left:1742.0px;top:1318px;font-size:22.3px;color:#3f3f3f;transform:scaleX(0.9261);">Leaf</span>
<span id="t91" class="t" style="left:1893.7px;top:1318px;font-size:22.3px;color:#3f3f3f;transform:scaleX(1.1033);">xe-0/0/0</span>
<span id="t92" class="t" style="left:2058.5px;top:1318px;font-size:22.3px;color:#3f3f3f;transform:scaleX(1.0301);">172.16.0.5/31</span>
<svg class="a" style="left:90px;top:1100px;" width="180" height="170" viewBox="90 1100 180 170"><g fill="#e5484d" stroke="#e5484d" stroke-width="3" stroke-linejoin="round" style="filter:drop-shadow(0 3px 4px rgba(0,0,0,.2))"><path d="M234 1117.200L136.600 1157.300L131.200 1146.800L102.800 1183L149.200 1181.600L143.200 1171.200L235.300 1119.600Z"/><path d="M242 1141L133.200 1221.200L126.400 1211.200L105.600 1253L151 1241.400L142.200 1232.600L243.800 1142.800Z"/></g></svg>
<div class="num" style="left:894.2px;top:19.2px;width:55.6px;height:55.6px;display:flex;align-items:center;justify-content:center;font-size:42.5px;font-weight:700;color:#fff;line-height:1"><span style="display:block;margin-top:-1.2px;transform:translateX(.8px) scaleX(1.03)">1</span></div>
<div class="num" style="left:112.2px;top:169.7px;width:55.6px;height:55.6px;display:flex;align-items:center;justify-content:center;font-size:42.5px;font-weight:700;color:#fff;line-height:1"><span style="display:block;margin-top:-1.2px;transform:translateX(.8px) scaleX(1.03)">2</span></div>
<div class="num" style="left:379.2px;top:327.59999999999997px;width:55.6px;height:55.6px;display:flex;align-items:center;justify-content:center;font-size:42.5px;font-weight:700;color:#fff;line-height:1"><span style="display:block;margin-top:-1.2px;transform:translateX(.8px) scaleX(1.03)">3</span></div>
<div class="num" style="left:249.2px;top:1084.1000000000001px;width:55.6px;height:55.6px;display:flex;align-items:center;justify-content:center;font-size:42.5px;font-weight:700;color:#fff;line-height:1"><span style="display:block;margin-top:-1.2px;transform:translateX(.8px) scaleX(1.03)">4</span></div>
<div class="num" style="left:560.3000000000001px;top:742.4000000000001px;width:55.6px;height:55.6px;display:flex;align-items:center;justify-content:center;font-size:42.5px;font-weight:700;color:#fff;line-height:1"><span style="display:block;margin-top:-1.2px;transform:translateX(.8px) scaleX(1.03)">5</span></div>
</div>
</body></html>
